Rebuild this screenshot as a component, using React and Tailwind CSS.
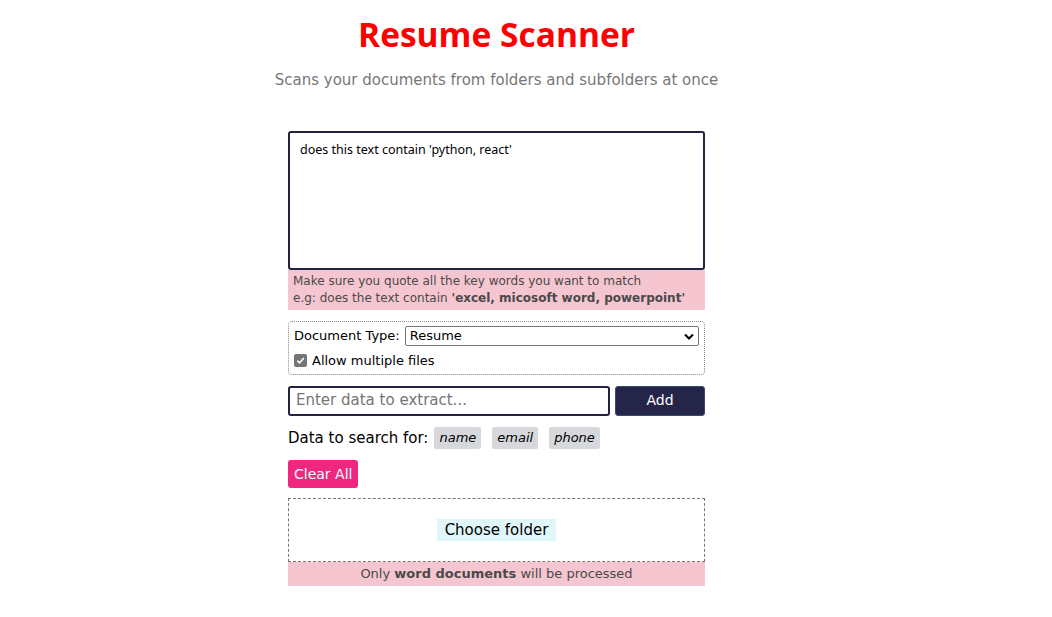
import React from "react";

export default function App() {
  const body = { fontFamily: '"DejaVu Sans", Verdana, sans-serif' };
  return (
    <div className="min-h-[617px] w-full bg-white">
      <div className="w-[993px] flex flex-col items-center" style={body}>
        <h1 className="mt-[13px] text-[33.5px] leading-[42px] font-bold text-[#ff0000]" style={{ fontFamily: '"Open Sans", sans-serif' }}>
          Resume Scanner
        </h1>
        <p className="mt-[16px] text-[15px] leading-[18px] text-[#777777]">
          Scans your documents from folders and subfolders at once
        </p>
        <div className="mt-[42px] w-[417px] flex flex-col">
          <div className="h-[139px] rounded-[3px] border-2 border-[#23233f] px-[10px] py-[8px] text-[12.5px] text-black" style={{ fontFamily: '"Noto Sans", sans-serif' }}>
            does this text contain 'python, react'
          </div>
          <div className="bg-[#f5c6d0] px-[5px] pt-[3px] pb-[3px] text-[12px] leading-[17px] text-[#4a4a4a]">
            <div>Make sure you quote all the key words you want to match</div>
            <div>
              e.g: does the text contain <b>'excel, micosoft word, powerpoint'</b>
            </div>
          </div>
          <div className="mt-[11px] rounded-[4px] border border-dotted border-[#888] px-[5px] pt-[4px] pb-[3px] text-[13px] text-black">
            <div className="flex items-center gap-[5px]">
              <span>Document Type:</span>
              <div className="flex-1 h-[20px] border border-[#767676] rounded-[2px] flex items-center justify-between px-[4px]">
                <span className="text-[13px]">Resume</span>
                <svg width="10" height="7" viewBox="0 0 10 7"><path d="M1 1.5 L5 5.5 L9 1.5" stroke="#000" strokeWidth="2" fill="none" /></svg>
              </div>
            </div>
            <div className="mt-[5px] flex items-center gap-[5px]">
              <span className="w-[13px] h-[13px] rounded-[2px] bg-[#757575] flex items-center justify-center">
                <svg width="9" height="9" viewBox="0 0 10 10"><path d="M1.5 5.2 L4 7.7 L8.7 2.3" stroke="#fff" strokeWidth="1.8" fill="none" /></svg>
              </span>
              <span>Allow multiple files</span>
            </div>
          </div>
          <div className="mt-[11px] flex gap-[5px]">
            <div className="w-[322px] h-[30px] border-2 border-[#23233f] rounded-[3px] flex items-center px-[6px] text-[15px] text-[#757575]">
              Enter data to extract...
            </div>
            <button className="flex-1 h-[30px] rounded-[3px] bg-[#25254a] text-white text-[14px] border border-[#3a4a6a]">Add</button>
          </div>
          <div className="mt-[11px] flex items-center text-[15px] text-black">
            <span>Data to search for:</span>
            <span className="ml-[6px] px-[5px] h-[22px] flex items-center bg-[#d6d8dc] rounded-[2px] italic text-[13px]">name</span>
            <span className="ml-[11px] px-[5px] h-[22px] flex items-center bg-[#d6d8dc] rounded-[2px] italic text-[13px]">email</span>
            <span className="ml-[11px] px-[5px] h-[22px] flex items-center bg-[#d6d8dc] rounded-[2px] italic text-[13px]">phone</span>
          </div>
          <div className="mt-[11px]">
            <button className="h-[28px] px-[6px] rounded-[3px] bg-[#f0277f] text-white text-[14px]">Clear All</button>
          </div>
          <div className="mt-[10px] h-[64px] border border-dashed border-[#777] flex items-center justify-center">
            <span className="bg-[#e0f7fa] px-[8px] h-[22px] flex items-center text-[15px] text-black">Choose folder</span>
          </div>
          <div className="h-[24px] bg-[#f5c6d0] flex items-center justify-center text-[13px] text-[#4a4a4a]">
            <span>Only <b>word documents</b> will be processed</span>
          </div>
        </div>
      </div>
    </div>
  );
}
